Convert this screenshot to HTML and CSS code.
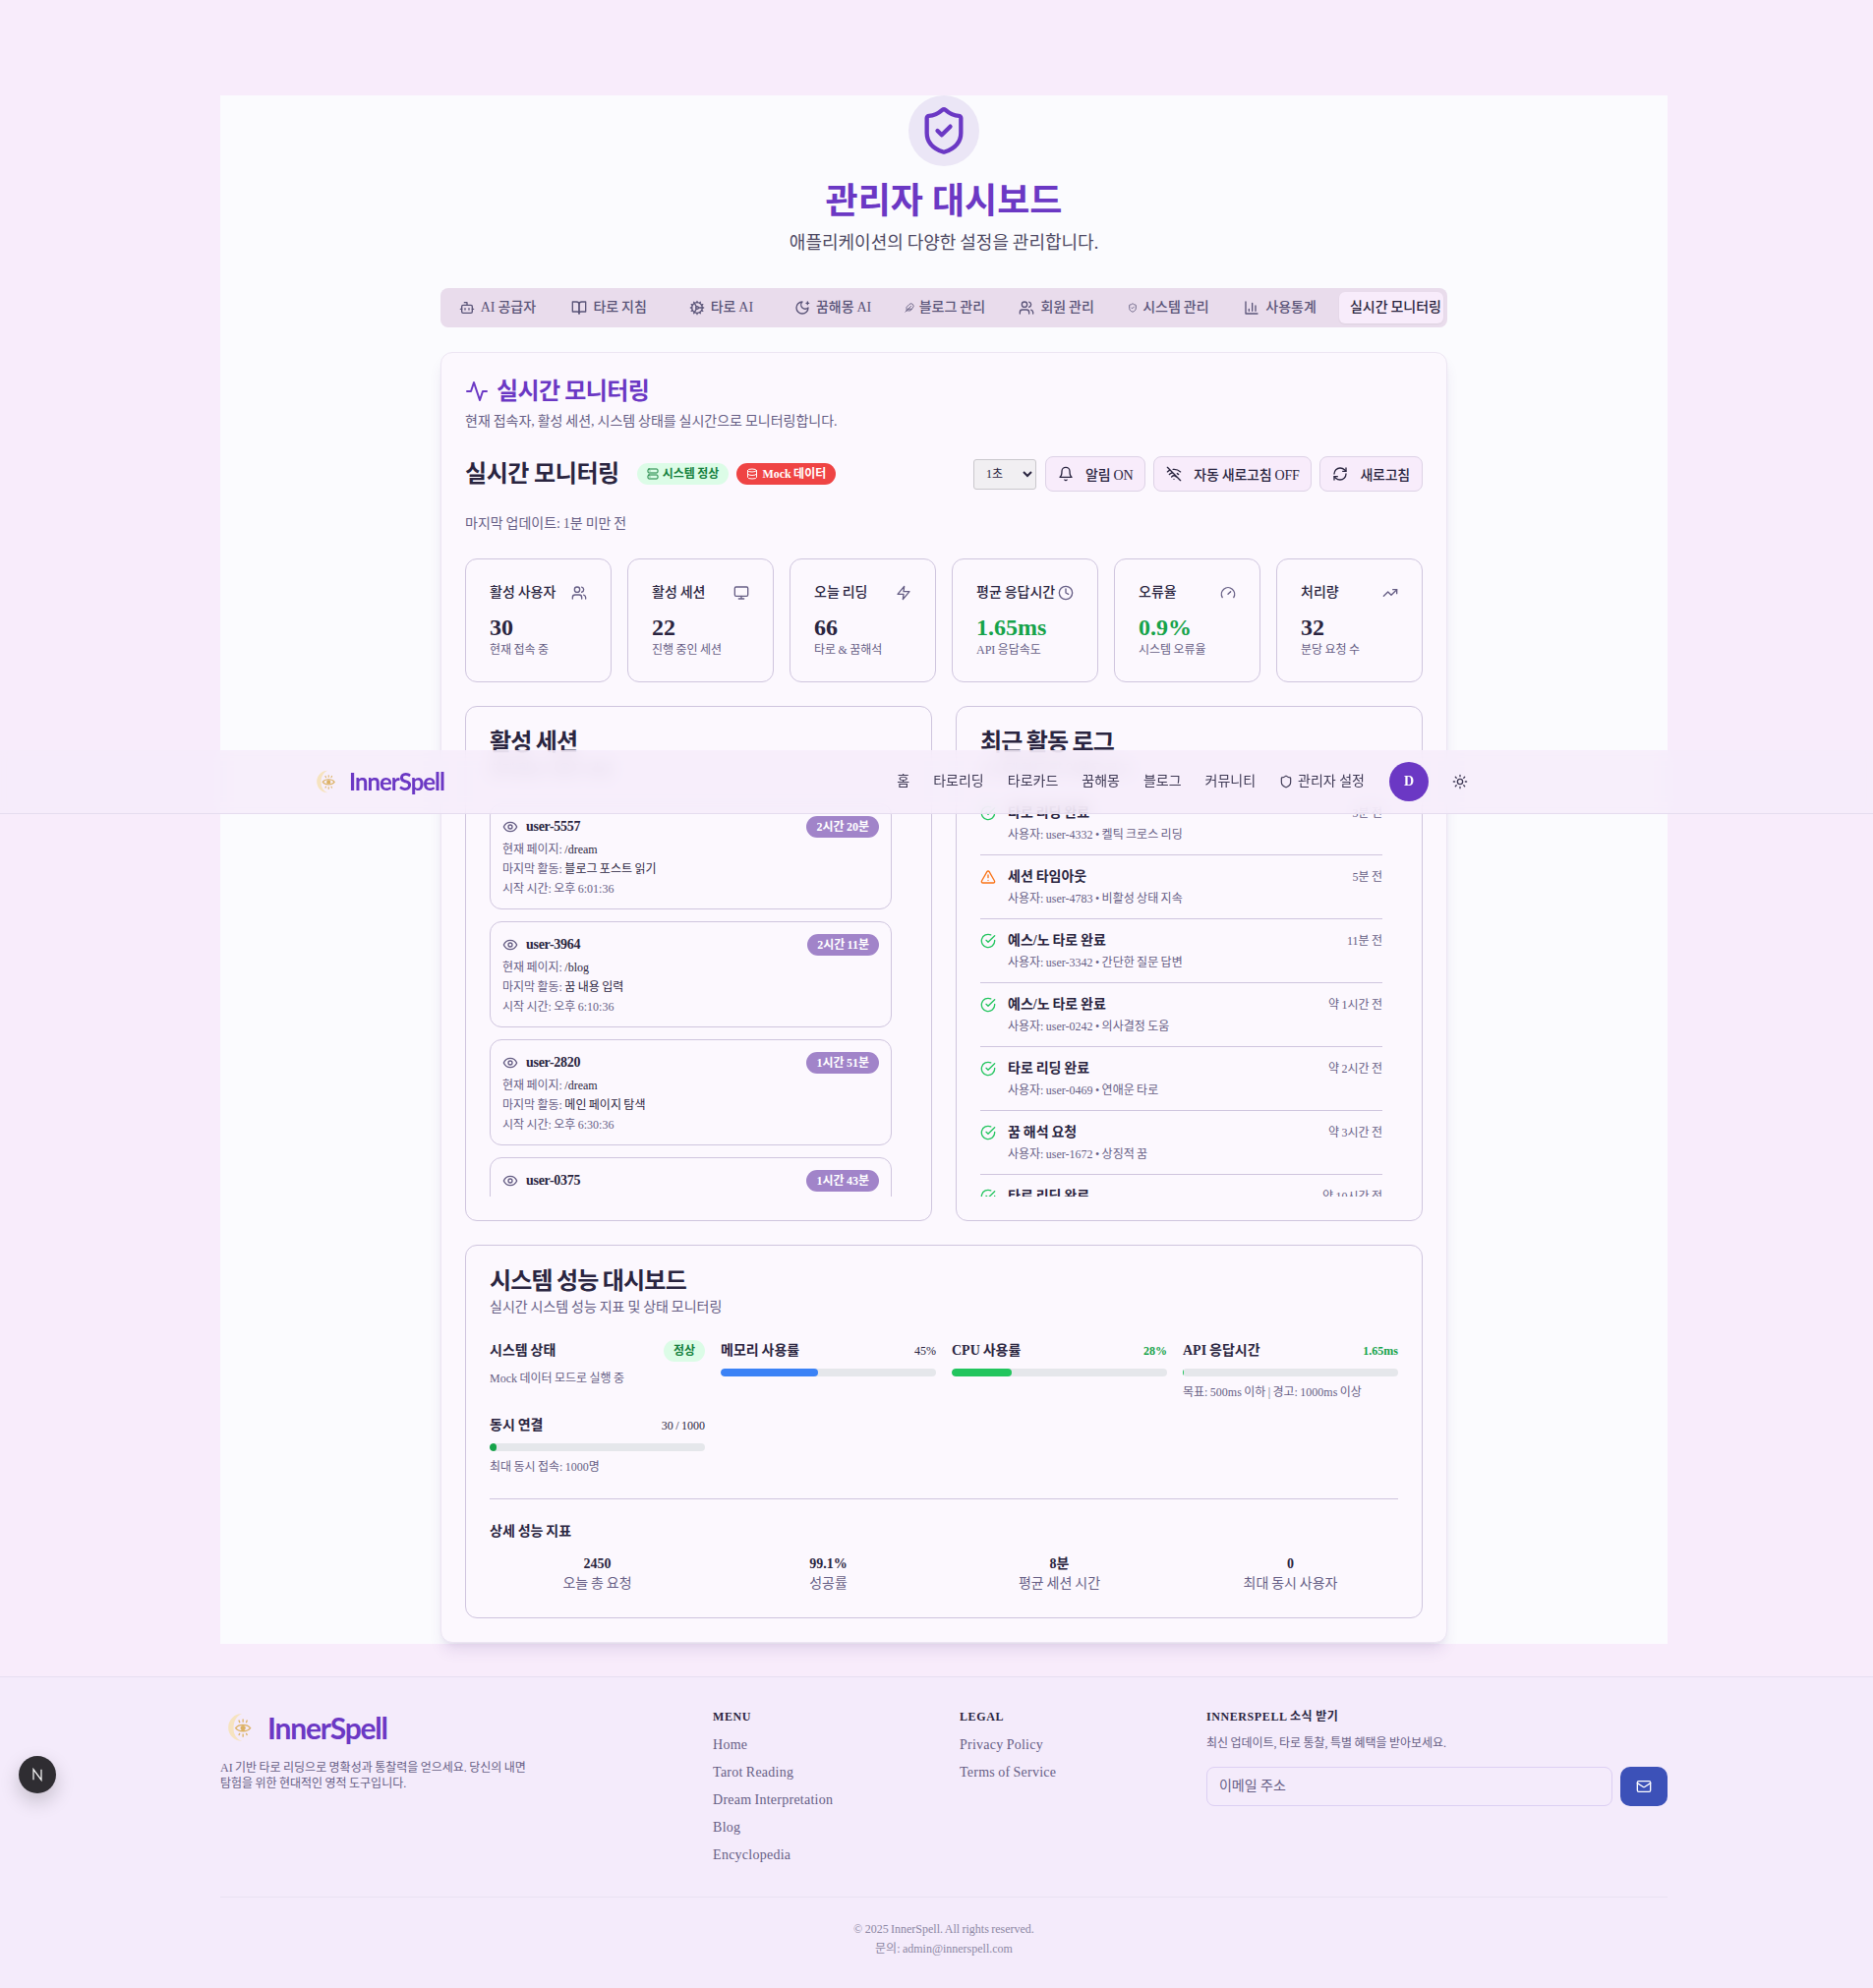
FILE: index.html
```html
<!DOCTYPE html>
<html lang="ko">
  <head>
    <meta charset="utf-8">
    <title>InnerSpell 관리자 대시보드</title>
    <link rel="stylesheet" href="styles.css">
  </head>
  <body>
    <svg class="sprite" xmlns="http://www.w3.org/2000/svg">
      <symbol id="i-bot" viewBox="0 0 24 24"><path d="M12 8V4H8"/><rect width="16" height="12" x="4" y="8" rx="2"/><path d="M2 14h2M20 14h2M15 13v2M9 13v2"/></symbol>
      <symbol id="i-book" viewBox="0 0 24 24"><path d="M2 3h6a4 4 0 0 1 4 4v14a3 3 0 0 0-3-3H2z"/><path d="M22 3h-6a4 4 0 0 0-4 4v14a3 3 0 0 1 3-3h7z"/></symbol>
      <symbol id="i-cog" viewBox="0 0 24 24"><path d="M12 20a8 8 0 1 0 0-16 8 8 0 0 0 0 16Z"/><path d="M12 14a2 2 0 1 0 0-4 2 2 0 0 0 0 4Z"/><path d="M12 2v2M12 22v-2M17 20.66l-1-1.73M11 10.27 7 3.34M20.66 17l-1.73-1M3.34 7l1.73 1M14 12h8M2 12h2M20.66 7l-1.73 1M3.34 17l1.73-1M17 3.34l-1 1.73M11 13.73l-4 6.93"/></symbol>
      <symbol id="i-moon" viewBox="0 0 24 24"><path d="M12 3a6 6 0 0 0 9 9 9 9 0 1 1-9-9Z"/><path d="M20 3v4M22 5h-4"/></symbol>
      <symbol id="i-feather" viewBox="0 0 24 24"><path d="M20.24 12.24a6 6 0 0 0-8.49-8.49L5 10.5V19h8.5z"/><path d="M16 8 2 22M17.5 15H9"/></symbol>
      <symbol id="i-users" viewBox="0 0 24 24"><path d="M16 21v-2a4 4 0 0 0-4-4H6a4 4 0 0 0-4 4v2"/><circle cx="9" cy="7" r="4"/><path d="M22 21v-2a4 4 0 0 0-3-3.87M16 3.13a4 4 0 0 1 0 7.75"/></symbol>
      <symbol id="i-shield-check" viewBox="0 0 24 24"><path d="M20 13c0 5-3.5 7.5-7.66 8.95a1 1 0 0 1-.67-.01C7.5 20.5 4 18 4 13V6a1 1 0 0 1 1-1c2 0 4.5-1.2 6.24-2.72a1.17 1.17 0 0 1 1.52 0C14.51 3.81 17 5 19 5a1 1 0 0 1 1 1z"/><path d="m9 12 2 2 4-4"/></symbol>
      <symbol id="i-shield" viewBox="0 0 24 24"><path d="M20 13c0 5-3.5 7.5-7.66 8.95a1 1 0 0 1-.67-.01C7.5 20.5 4 18 4 13V6a1 1 0 0 1 1-1c2 0 4.5-1.2 6.24-2.72a1.17 1.17 0 0 1 1.52 0C14.51 3.81 17 5 19 5a1 1 0 0 1 1 1z"/></symbol>
      <symbol id="i-chart" viewBox="0 0 24 24"><path d="M3 3v18h18M18 17V9M13 17V5M8 17v-3"/></symbol>
      <symbol id="i-activity" viewBox="0 0 24 24"><path d="M22 12h-4l-3 9L9 3l-3 9H2"/></symbol>
      <symbol id="i-server" viewBox="0 0 24 24"><rect width="20" height="8" x="2" y="2" rx="2"/><rect width="20" height="8" x="2" y="14" rx="2"/><path d="M6 6h.01M6 18h.01"/></symbol>
      <symbol id="i-database" viewBox="0 0 24 24"><ellipse cx="12" cy="5" rx="9" ry="3"/><path d="M3 5v14a9 3 0 0 0 18 0V5"/><path d="M3 12a9 3 0 0 0 18 0"/></symbol>
      <symbol id="i-bell" viewBox="0 0 24 24"><path d="M6 8a6 6 0 0 1 12 0c0 7 3 9 3 9H3s3-2 3-9"/><path d="M10.3 21a1.94 1.94 0 0 0 3.4 0"/></symbol>
      <symbol id="i-wifi-off" viewBox="0 0 24 24"><path d="M12 20h.01M8.5 16.43a5 5 0 0 1 7 0M5 12.86a10 10 0 0 1 5.17-2.69M19 12.86a10 10 0 0 0-2-1.52M2 8.82a15 15 0 0 1 4.18-2.64M22 8.82a15 15 0 0 0-11.29-3.76M2 2l20 20"/></symbol>
      <symbol id="i-refresh" viewBox="0 0 24 24"><path d="M3 12a9 9 0 0 1 9-9 9.75 9.75 0 0 1 6.74 2.74L21 8"/><path d="M21 3v5h-5"/><path d="M21 12a9 9 0 0 1-9 9 9.75 9.75 0 0 1-6.74-2.74L3 16"/><path d="M8 16H3v5"/></symbol>
      <symbol id="i-monitor" viewBox="0 0 24 24"><rect width="20" height="14" x="2" y="3" rx="2"/><path d="M8 21h8M12 17v4"/></symbol>
      <symbol id="i-zap" viewBox="0 0 24 24"><path d="M13 2 3 14h9l-1 8 10-12h-9l1-8z"/></symbol>
      <symbol id="i-clock" viewBox="0 0 24 24"><circle cx="12" cy="12" r="10"/><path d="M12 6v6l4 2"/></symbol>
      <symbol id="i-gauge" viewBox="0 0 24 24"><path d="m12 14 4-4"/><path d="M3.34 19a10 10 0 1 1 17.32 0"/></symbol>
      <symbol id="i-trend" viewBox="0 0 24 24"><path d="m22 7-8.5 8.5-5-5L2 17"/><path d="M16 7h6v6"/></symbol>
      <symbol id="i-eye" viewBox="0 0 24 24"><path d="M2 12s3-7 10-7 10 7 10 7-3 7-10 7-10-7-10-7Z"/><circle cx="12" cy="12" r="3"/></symbol>
      <symbol id="i-check" viewBox="0 0 24 24"><path d="M22 11.08V12a10 10 0 1 1-5.93-9.14"/><path d="m22 4-10 10.01-3-3"/></symbol>
      <symbol id="i-alert" viewBox="0 0 24 24"><path d="m21.73 18-8-14a2 2 0 0 0-3.48 0l-8 14A2 2 0 0 0 4 21h16a2 2 0 0 0 1.73-3"/><path d="M12 9v4M12 17h.01"/></symbol>
      <symbol id="i-sun" viewBox="0 0 24 24"><circle cx="12" cy="12" r="4"/><path d="M12 2v2M12 20v2M4.93 4.93l1.41 1.41M17.66 17.66l1.41 1.41M2 12h2M20 12h2M6.34 17.66l-1.41 1.41M19.07 4.93l-1.41 1.41"/></symbol>
      <symbol id="i-mail" viewBox="0 0 24 24"><rect width="20" height="16" x="2" y="4" rx="2"/><path d="m22 7-8.97 5.7a1.94 1.94 0 0 1-2.06 0L2 7"/></symbol>
      <symbol id="i-logo" viewBox="0 0 26 28"><path class="logo-moon" d="M14 1a13 13 0 1 0 0 26 12 12 0 0 1-8-12C6 8 9 3 14 1z"/><path class="logo-eye" d="M8 14.500c3-4 11-4 14 0-3 4-11 4-14 0z"/><circle class="logo-pupil" cx="15" cy="14.500" r="2.400"/><path class="logo-eye" d="M15 6v3M11 7l1 2.500M19 7l-1 2.500M15 20v3M12 19.500l-1 2M18 19.500l1 2"/></symbol>
    </svg>

    <header class="topbar">
      <a class="logo logo-nav"><svg class="logo-mark"><use href="#i-logo"/></svg><span>InnerSpell</span></a>
      <nav class="topnav">
        <a>홈</a>
        <a>타로리딩</a>
        <a>타로카드</a>
        <a>꿈해몽</a>
        <a>블로그</a>
        <a>커뮤니티</a>
        <a class="topnav-admin"><svg class="icon i14"><use href="#i-shield"/></svg>관리자 설정</a>
      </nav>
      <div class="avatar">D</div>
      <button class="theme-btn"><svg class="icon i16"><use href="#i-sun"/></svg></button>
    </header>

    <main class="page">
      <div class="hero">
        <div class="hero-badge"><svg class="icon i52"><use href="#i-shield-check"/></svg></div>
        <h1>관리자 대시보드</h1>
        <p>애플리케이션의 다양한 설정을 관리합니다.</p>
      </div>

      <div class="tabs">
        <a class="tab"><svg class="icon i16"><use href="#i-bot"/></svg>AI 공급자</a>
        <a class="tab"><svg class="icon i16"><use href="#i-book"/></svg>타로 지침</a>
        <a class="tab"><svg class="icon i16"><use href="#i-cog"/></svg>타로 AI</a>
        <a class="tab"><svg class="icon i16"><use href="#i-moon"/></svg>꿈해몽 AI</a>
        <a class="tab tab-tight"><svg class="icon i8"><use href="#i-feather"/></svg>블로그 관리</a>
        <a class="tab"><svg class="icon i16"><use href="#i-users"/></svg>회원 관리</a>
        <a class="tab tab-tight"><svg class="icon i8"><use href="#i-shield-check"/></svg>시스템 관리</a>
        <a class="tab"><svg class="icon i16"><use href="#i-chart"/></svg>사용통계</a>
        <a class="tab tab-active">실시간 모니터링</a>
      </div>

      <section class="card">
        <h2 class="card-title"><svg class="icon i24"><use href="#i-activity"/></svg>실시간 모니터링</h2>
        <p class="card-desc">현재 접속자, 활성 세션, 시스템 상태를 실시간으로 모니터링합니다.</p>

        <div class="toolbar">
          <div class="toolbar-left">
            <h3>실시간 모니터링</h3>
            <span class="pill pill-ok"><svg class="icon i12"><use href="#i-server"/></svg>시스템 정상</span>
            <span class="pill pill-mock"><svg class="icon i12"><use href="#i-database"/></svg>Mock 데이터</span>
          </div>
          <div class="toolbar-right">
            <select class="interval"><option>1초</option></select>
            <button class="btn"><svg class="icon i16"><use href="#i-bell"/></svg>알림 ON</button>
            <button class="btn"><svg class="icon i16"><use href="#i-wifi-off"/></svg>자동 새로고침 OFF</button>
            <button class="btn"><svg class="icon i16"><use href="#i-refresh"/></svg>새로고침</button>
          </div>
        </div>

        <p class="updated">마지막 업데이트: 1분 미만 전</p>

        <div class="stats">
          <div class="stat">
            <div class="stat-head"><span>활성 사용자</span><svg class="icon i16"><use href="#i-users"/></svg></div>
            <div class="stat-value">30</div>
            <div class="stat-note">현재 접속 중</div>
          </div>
          <div class="stat">
            <div class="stat-head"><span>활성 세션</span><svg class="icon i16"><use href="#i-monitor"/></svg></div>
            <div class="stat-value">22</div>
            <div class="stat-note">진행 중인 세션</div>
          </div>
          <div class="stat">
            <div class="stat-head"><span>오늘 리딩</span><svg class="icon i16"><use href="#i-zap"/></svg></div>
            <div class="stat-value">66</div>
            <div class="stat-note">타로 &amp; 꿈해석</div>
          </div>
          <div class="stat">
            <div class="stat-head"><span>평균 응답시간</span><svg class="icon i16"><use href="#i-clock"/></svg></div>
            <div class="stat-value good">1.65ms</div>
            <div class="stat-note">API 응답속도</div>
          </div>
          <div class="stat">
            <div class="stat-head"><span>오류율</span><svg class="icon i16"><use href="#i-gauge"/></svg></div>
            <div class="stat-value good">0.9%</div>
            <div class="stat-note">시스템 오류율</div>
          </div>
          <div class="stat">
            <div class="stat-head"><span>처리량</span><svg class="icon i16"><use href="#i-trend"/></svg></div>
            <div class="stat-value">32</div>
            <div class="stat-note">분당 요청 수</div>
          </div>
        </div>

        <div class="panels">
          <div class="panel">
            <h3 class="panel-title">활성 세션</h3>
            <p class="panel-desc">현재 활성 사용자 세션</p>
            <div class="scroll scroll-sessions">
              <div class="session">
                <div class="session-head"><span class="session-user"><svg class="icon i16"><use href="#i-eye"/></svg>user-5557</span><span class="duration">2시간 20분</span></div>
                <p>현재 페이지: <b>/dream</b></p>
                <p>마지막 활동: <b>블로그 포스트 읽기</b></p>
                <p>시작 시간: 오후 6:01:36</p>
              </div>
              <div class="session">
                <div class="session-head"><span class="session-user"><svg class="icon i16"><use href="#i-eye"/></svg>user-3964</span><span class="duration">2시간 11분</span></div>
                <p>현재 페이지: <b>/blog</b></p>
                <p>마지막 활동: <b>꿈 내용 입력</b></p>
                <p>시작 시간: 오후 6:10:36</p>
              </div>
              <div class="session">
                <div class="session-head"><span class="session-user"><svg class="icon i16"><use href="#i-eye"/></svg>user-2820</span><span class="duration">1시간 51분</span></div>
                <p>현재 페이지: <b>/dream</b></p>
                <p>마지막 활동: <b>메인 페이지 탐색</b></p>
                <p>시작 시간: 오후 6:30:36</p>
              </div>
              <div class="session">
                <div class="session-head"><span class="session-user"><svg class="icon i16"><use href="#i-eye"/></svg>user-0375</span><span class="duration">1시간 43분</span></div>
              </div>
            </div>
          </div>

          <div class="panel">
            <h3 class="panel-title">최근 활동 로그</h3>
            <p class="panel-desc">시스템 활동 및 이벤트 로그</p>
            <div class="scroll">
              <div class="log">
                <svg class="icon i16 ok"><use href="#i-check"/></svg>
                <div class="log-body"><div class="log-head"><b>타로 리딩 완료</b><span>3분 전</span></div><p>사용자: user-4332 • 켈틱 크로스 리딩</p></div>
              </div>
              <div class="log">
                <svg class="icon i16 warn"><use href="#i-alert"/></svg>
                <div class="log-body"><div class="log-head"><b>세션 타임아웃</b><span>5분 전</span></div><p>사용자: user-4783 • 비활성 상태 지속</p></div>
              </div>
              <div class="log">
                <svg class="icon i16 ok"><use href="#i-check"/></svg>
                <div class="log-body"><div class="log-head"><b>예스/노 타로 완료</b><span>11분 전</span></div><p>사용자: user-3342 • 간단한 질문 답변</p></div>
              </div>
              <div class="log">
                <svg class="icon i16 ok"><use href="#i-check"/></svg>
                <div class="log-body"><div class="log-head"><b>예스/노 타로 완료</b><span>약 1시간 전</span></div><p>사용자: user-0242 • 의사결정 도움</p></div>
              </div>
              <div class="log">
                <svg class="icon i16 ok"><use href="#i-check"/></svg>
                <div class="log-body"><div class="log-head"><b>타로 리딩 완료</b><span>약 2시간 전</span></div><p>사용자: user-0469 • 연애운 타로</p></div>
              </div>
              <div class="log">
                <svg class="icon i16 ok"><use href="#i-check"/></svg>
                <div class="log-body"><div class="log-head"><b>꿈 해석 요청</b><span>약 3시간 전</span></div><p>사용자: user-1672 • 상징적 꿈</p></div>
              </div>
              <div class="log">
                <svg class="icon i16 ok"><use href="#i-check"/></svg>
                <div class="log-body"><div class="log-head"><b>타로 리딩 완료</b><span>약 10시간 전</span></div></div>
              </div>
            </div>
          </div>
        </div>

        <div class="panel perf">
          <h3 class="panel-title">시스템 성능 대시보드</h3>
          <p class="perf-desc">실시간 시스템 성능 지표 및 상태 모니터링</p>
          <div class="perf-grid">
            <div>
              <div class="perf-head"><b>시스템 상태</b><span class="pill-state">정상</span></div>
              <p class="perf-note perf-note-state">Mock 데이터 모드로 실행 중</p>
            </div>
            <div>
              <div class="perf-head"><b>메모리 사용률</b><span>45%</span></div>
              <div class="bar"><div class="bar-fill fill-blue" style="width: 45%"></div></div>
            </div>
            <div>
              <div class="perf-head"><b>CPU 사용률</b><span class="good">28%</span></div>
              <div class="bar"><div class="bar-fill fill-green" style="width: 28%"></div></div>
            </div>
            <div>
              <div class="perf-head"><b>API 응답시간</b><span class="good">1.65ms</span></div>
              <div class="bar"><div class="bar-fill fill-green" style="width: 0.4%"></div></div>
              <p class="perf-note">목표: 500ms 이하 | 경고: 1000ms 이상</p>
            </div>
            <div>
              <div class="perf-head"><b>동시 연결</b><span>30 / 1000</span></div>
              <div class="bar"><div class="bar-fill fill-dark" style="width: 3%"></div></div>
              <p class="perf-note">최대 동시 접속: 1000명</p>
            </div>
          </div>
          <div class="detail">
            <h4>상세 성능 지표</h4>
            <div class="detail-grid">
              <div><b>2450</b><span>오늘 총 요청</span></div>
              <div><b>99.1%</b><span>성공률</span></div>
              <div><b>8분</b><span>평균 세션 시간</span></div>
              <div><b>0</b><span>최대 동시 사용자</span></div>
            </div>
          </div>
        </div>
      </section>
    </main>

    <footer class="footer">
      <div class="footer-inner">
        <div class="footer-cols">
          <div>
            <a class="logo logo-foot"><svg class="logo-mark"><use href="#i-logo"/></svg><span>InnerSpell</span></a>
            <p class="footer-about">AI 기반 타로 리딩으로 명확성과 통찰력을 얻으세요. 당신의 내면 탐험을 위한 현대적인 영적 도구입니다.</p>
          </div>
          <div>
            <h5>Menu</h5>
            <ul>
              <li>Home</li>
              <li>Tarot Reading</li>
              <li>Dream Interpretation</li>
              <li>Blog</li>
              <li>Encyclopedia</li>
            </ul>
          </div>
          <div>
            <h5>Legal</h5>
            <ul>
              <li>Privacy Policy</li>
              <li>Terms of Service</li>
            </ul>
          </div>
          <div>
            <h5>InnerSpell 소식 받기</h5>
            <p class="news-desc">최신 업데이트, 타로 통찰, 특별 혜택을 받아보세요.</p>
            <form class="news-form">
              <input type="email" placeholder="이메일 주소">
              <button type="button"><svg class="icon i16"><use href="#i-mail"/></svg></button>
            </form>
          </div>
        </div>
        <div class="copyright">
          <p>© 2025 InnerSpell. All rights reserved.</p>
          <p>문의: admin@innerspell.com</p>
        </div>
      </div>
    </footer>

    <div class="dev-badge">
      <svg viewBox="0 0 24 24" width="16" height="16"><path d="M6 20V4l12 16V4" fill="none" stroke="#fff" stroke-width="1.800"/></svg>
    </div>
  </body>
</html>
```

FILE: styles.css
```css
html, body {
  margin: 0;
  padding: 0;
}

body {
  position: relative;
  padding-top: 97px;
  background: #f8ecfb;
  color: #2a2540;
  font-family: "Liberation Serif", "Noto Sans CJK KR", serif;
  font-size: 14px;
  line-height: 20px;
  word-spacing: -0.6px;
}

h1, h2, h3, h4, h5, p, ul {
  margin: 0;
  padding: 0;
}

.sprite {
  position: absolute;
  width: 0;
  height: 0;
}

.icon {
  flex: none;
  fill: none;
  stroke: currentColor;
  stroke-width: 2;
  stroke-linecap: round;
  stroke-linejoin: round;
}
.i8 { width: 10px; height: 10px; }
.i12 { width: 12px; height: 12px; }
.i14 { width: 14px; height: 14px; }
.i16 { width: 16px; height: 16px; }
.i24 { width: 24px; height: 24px; }
.i52 { width: 52px; height: 52px; }

.good { color: #16a34a; }
.ok { color: #22c55e; }
.warn { color: #f97316; }

/* top bar sits over the scrolled page */
.topbar {
  position: absolute;
  top: 763px;
  left: 0;
  right: 0;
  z-index: 5;
  height: 64px;
  display: flex;
  align-items: center;
  padding: 0 400px 0 321px;
  background: rgba(245, 235, 250, 0.82);
  border-bottom: 1px solid #e5dcef;
  backdrop-filter: blur(8px);
}

.logo {
  display: flex;
  align-items: center;
  color: #6b38c4;
  font-family: "Lato", "Noto Sans CJK KR", sans-serif;
  font-weight: 700;
}
.logo-mark {
  flex: none;
}
.logo-moon { fill: #f6e3bf; stroke: none; }
.logo-eye { fill: none; stroke: #dcb163; stroke-width: 1.2; }
.logo-pupil { fill: #dcb163; stroke: none; }

.logo-nav {
  gap: 11px;
  font-size: 24px;
  letter-spacing: -1px;
}
.logo-nav .logo-mark { width: 23px; height: 24px; }

.topnav {
  margin-left: auto;
  display: flex;
  align-items: center;
  gap: 24px;
  color: #3f3a55;
  word-spacing: 0;
}
.topnav-admin {
  display: flex;
  align-items: center;
  gap: 5px;
}

.avatar {
  margin-left: 25px;
  width: 40px;
  height: 40px;
  border-radius: 50%;
  background: #6b38c4;
  color: #fff;
  display: flex;
  align-items: center;
  justify-content: center;
  font-weight: 700;
}

.theme-btn {
  margin-left: 12px;
  width: 40px;
  height: 40px;
  padding: 0;
  border: 0;
  background: none;
  color: #3f3a55;
  display: flex;
  align-items: center;
  justify-content: center;
}

/* page */
.page {
  box-sizing: border-box;
  width: 1472px;
  margin-left: 224px;
  padding: 0 224px 1px;
  background: #fbfbfe;
}

.hero {
  padding-bottom: 32px;
  text-align: center;
}
.hero-badge {
  width: 72px;
  height: 72px;
  margin: 0 auto 16px;
  border-radius: 50%;
  background: #ebe6f6;
  color: #6b38c4;
  display: flex;
  align-items: center;
  justify-content: center;
}
.hero h1 {
  color: #6b38c4;
  font-size: 36px;
  line-height: 40px;
  font-weight: 700;
  word-spacing: 0;
}
.hero p {
  margin-top: 8px;
  color: #4d4862;
  font-size: 18px;
  line-height: 28px;
}

.tabs {
  display: grid;
  grid-template-columns: repeat(8, 1fr) 106px;
  align-items: center;
  height: 32px;
  padding: 4px;
  border-radius: 8px;
  background: #e9dcec;
  color: #5a5478;
}
.tab {
  display: flex;
  align-items: center;
  justify-content: center;
  gap: 6px;
  height: 32px;
  padding-right: 6px;
  font-weight: 500;
  white-space: nowrap;
}
.tab-tight { gap: 5px; }
.tab-active {
  justify-content: flex-end;
  padding-right: 2px;
  border-radius: 6px;
  background: #f8ecfb;
  color: #2a2540;
  box-shadow: 0 1px 2px rgba(0, 0, 0, 0.05);
}

.card {
  margin-top: 25px;
  padding: 23px 24px 24px;
  background: #fcf8fe;
  border: 1px solid #ece5f3;
  border-radius: 12px;
  box-shadow: 0 10px 15px -3px rgba(80, 50, 130, 0.12), 0 4px 6px -4px rgba(80, 50, 130, 0.1);
}
.card-title {
  display: flex;
  align-items: center;
  gap: 8px;
  color: #6b38c4;
  font-size: 24px;
  line-height: 32px;
  font-weight: 600;
  letter-spacing: -0.6px;
}
.card-desc {
  margin-top: 5px;
  color: #665e85;
}

.toolbar {
  margin-top: 25px;
  display: flex;
  align-items: center;
  justify-content: space-between;
}
.toolbar-left,
.toolbar-right {
  display: flex;
  align-items: center;
  gap: 8px;
}
.toolbar-left h3 {
  margin-right: 10px;
  font-size: 24px;
  line-height: 32px;
  font-weight: 700;
  letter-spacing: -0.4px;
}

.pill {
  display: inline-flex;
  align-items: center;
  gap: 4px;
  height: 22px;
  padding: 0 10px;
  border-radius: 11px;
  font-size: 12px;
  font-weight: 700;
}
.pill-ok { background: #dcfce7; color: #15803d; }
.pill-mock { background: #ef4444; color: #fff; }

.interval {
  width: 64px;
  height: 31px;
  margin-right: 1px;
  padding: 0 4px 0 8px;
  background: #f1eff2;
  border: 1px solid #c9c7cc;
  border-radius: 3px;
  color: #2a2540;
  font: 12px "Liberation Serif", "Noto Sans CJK KR", serif;
}

.btn {
  display: flex;
  align-items: center;
  gap: 12px;
  height: 36px;
  padding: 0 12px;
  background: #f8ecfb;
  border: 1px solid #ddd2e6;
  border-radius: 8px;
  color: #2a2540;
  font: 500 14px "Liberation Serif", "Noto Sans CJK KR", serif;
  letter-spacing: -0.25px;
  white-space: nowrap;
}

.updated {
  margin-top: 23px;
  color: #665e85;
}

.stats {
  margin-top: 25px;
  display: grid;
  grid-template-columns: repeat(6, 1fr);
  gap: 16px;
}
.stat {
  padding: 24px;
  background: #fcf8fe;
  border: 1px solid #cfc5de;
  border-radius: 12px;
}
.stat-head {
  display: flex;
  align-items: center;
  justify-content: space-between;
  font-weight: 500;
  white-space: nowrap;
  color: #2a2540;
}
.stat-head .icon { color: #665e85; }
.stat-value {
  margin-top: 11px;
  font-size: 24px;
  line-height: 28px;
  font-weight: 700;
}
.stat-note {
  margin-top: 1px;
  color: #665e85;
  font-size: 12px;
  line-height: 16px;
}

.panels {
  margin-top: 24px;
  display: grid;
  grid-template-columns: 1fr 1fr;
  gap: 24px;
}
.panel {
  padding: 24px;
  background: #fcf8fe;
  border: 1px solid #cfc5de;
  border-radius: 12px;
}
.panel-title {
  font-size: 24px;
  line-height: 24px;
  font-weight: 700;
  letter-spacing: -0.8px;
  word-spacing: -1px;
}
.panel-desc {
  margin-top: 6px;
  color: #665e85;
}

.scroll {
  margin-top: 24px;
  height: 400px;
  padding-right: 16px;
  overflow: hidden;
  display: flex;
  flex-direction: column;
}
.scroll-sessions {
  gap: 12px;
}

.session {
  flex: none;
  height: 82px;
  padding: 12px;
  border: 1px solid #cfc5de;
  border-radius: 12px;
  color: #665e85;
  font-size: 12px;
  line-height: 20px;
}
.session b {
  font-weight: 400;
  color: #2a2540;
}
.session-head {
  display: flex;
  align-items: center;
  justify-content: space-between;
  height: 22px;
  margin-bottom: 2px;
}
.session-user {
  display: flex;
  align-items: center;
  gap: 8px;
  color: #2a2540;
  font-size: 14px;
  font-weight: 600;
  letter-spacing: -0.3px;
}
.session-user .icon { color: #665e85; }
.duration {
  padding: 0 10px;
  border-radius: 11px;
  background: #a184c9;
  color: #fff;
  font-weight: 700;
  line-height: 22px;
}

.log {
  flex: none;
  display: flex;
  gap: 12px;
  padding-bottom: 12px;
  margin-bottom: 12px;
  border-bottom: 1px solid #cfc5de;
}
.log .icon {
  margin-top: 2px;
}
.log-body {
  flex: 1;
}
.log-head {
  display: flex;
  align-items: center;
  justify-content: space-between;
}
.log-head b {
  font-weight: 600;
}
.log-head span {
  color: #665e85;
  font-size: 12px;
}
.log-body p {
  margin-top: 4px;
  color: #665e85;
  font-size: 12px;
  line-height: 16px;
}

.perf {
  margin-top: 24px;
}
.perf-desc {
  margin-top: 5px;
  color: #665e85;
}
.perf-grid {
  margin-top: 24px;
  display: grid;
  grid-template-columns: repeat(4, 1fr);
  gap: 16px;
}
.perf-head {
  display: flex;
  align-items: center;
  justify-content: space-between;
  height: 20px;
  font-size: 12px;
}
.perf-head b {
  font-size: 14px;
  font-weight: 600;
}
.perf-head .good { font-weight: 700; }
.pill-state {
  padding: 0 10px;
  border-radius: 11px;
  background: #dcfce7;
  color: #15803d;
  font-weight: 700;
  line-height: 22px;
}
.perf-note {
  margin-top: 8px;
  color: #665e85;
  font-size: 12px;
  line-height: 16px;
}
.perf-note-state {
  margin-top: 10px;
}
.bar {
  margin-top: 8px;
  height: 8px;
  border-radius: 4px;
  background: #e5e7eb;
  overflow: hidden;
}
.bar-fill {
  height: 100%;
  border-radius: 4px;
}
.fill-blue { background: #3b82f6; }
.fill-green { background: #22c55e; }
.fill-dark { background: #16a34a; }

.detail {
  margin-top: 24px;
  padding-top: 23px;
  border-top: 1px solid #cfc5de;
}
.detail h4 {
  font-size: 14px;
  font-weight: 600;
}
.detail-grid {
  margin-top: 13px;
  display: grid;
  grid-template-columns: repeat(4, 1fr);
  gap: 16px;
  text-align: center;
}
.detail-grid b {
  display: block;
  font-weight: 700;
  font-size: 14px;
}
.detail-grid span {
  display: block;
  color: #665e85;
}

/* footer */
.footer {
  margin-top: 33px;
  background: #f4ebfb;
  border-top: 1px solid #e6dff0;
  height: 317px;
}
.footer-inner {
  width: 1472px;
  margin-left: 224px;
}
.footer-cols {
  display: grid;
  grid-template-columns: 15fr 7fr 7fr 15fr;
  gap: 32px;
  padding-top: 32px;
  height: 191px;
  border-bottom: 1px solid #e9e1f2;
}
.logo-foot {
  gap: 13px;
  margin-left: 7px;
  margin-top: 1px;
  font-size: 30px;
  line-height: 36px;
  letter-spacing: -1.2px;
}
.logo-foot .logo-mark { width: 28px; height: 30px; }
.footer-about {
  margin-top: 15px;
  max-width: 320px;
  color: #665e85;
  font-size: 12px;
  line-height: 16px;
}
.footer h5 {
  color: #2a2540;
  font-size: 12px;
  line-height: 16px;
  font-weight: 700;
  text-transform: uppercase;
  letter-spacing: 0.6px;
}
.footer ul {
  margin-top: 11px;
  list-style: none;
  color: #665e85;
  letter-spacing: 0.25px;
}
.footer li {
  height: 20px;
  margin-bottom: 8px;
}
.news-desc {
  margin-top: 11px;
  color: #665e85;
  font-size: 12px;
  line-height: 16px;
}
.news-form {
  margin-top: 16px;
  display: flex;
  gap: 8px;
}
.news-form input {
  flex: 1;
  min-width: 0;
  height: 38px;
  padding: 0 12px;
  background: transparent;
  border: 1px solid #dccff3;
  border-radius: 8px;
  font: 14px "Liberation Serif", "Noto Sans CJK KR", serif;
}
.news-form input::placeholder {
  color: #665e85;
}
.news-form button {
  width: 48px;
  height: 40px;
  padding: 0;
  border: 0;
  border-radius: 10px;
  background: #3c51b8;
  color: #fff;
  display: flex;
  align-items: center;
  justify-content: center;
}
.copyright {
  margin-top: 22px;
  text-align: center;
  color: #8c87a3;
  font-size: 12px;
}

/* little dev tools badge, floats over the page */
.dev-badge {
  position: absolute;
  left: 19px;
  top: 1786px;
  width: 38px;
  height: 38px;
  border-radius: 50%;
  background: #2f2d32;
  display: flex;
  align-items: center;
  justify-content: center;
  box-shadow: 0 8px 20px rgba(0, 0, 0, 0.2);
}
```
